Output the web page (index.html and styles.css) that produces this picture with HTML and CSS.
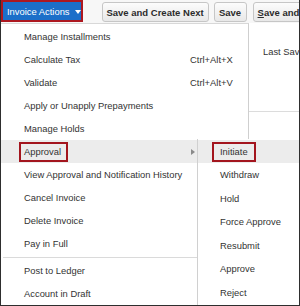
FILE: index.html
```html
<!DOCTYPE html>
<html>
<head>
<meta charset="utf-8">
<link rel="stylesheet" href="styles.css">
</head>
<body>
<div class="frame">
  <div class="toolbar">
    <button class="btn-primary">Invoice Actions <span class="caret"></span></button>
    <button class="btn btn-create">Save and Create Next</button>
    <button class="btn btn-save">Save</button>
    <button class="btn btn-saveand"><u>S</u>ave and Close</button>
  </div>
  <div class="page">
    <div class="last-saved">Last Saved</div>
    <div class="page-rule"></div>
  </div>

  <div class="menu">
    <div class="item"><span>Manage Installments</span></div>
    <div class="item"><span>Calculate Tax</span><span class="key">Ctrl+Alt+X</span></div>
    <div class="item"><span>Validate</span><span class="key">Ctrl+Alt+V</span></div>
    <div class="item"><span>Apply or Unapply Prepayments</span></div>
    <div class="item"><span>Manage Holds</span></div>
    <div class="item active"><span><span class="mark mark-approval">Approval</span></span><span class="arrow"></span></div>
    <div class="item"><span>View Approval and Notification History</span></div>
    <div class="item"><span>Cancel Invoice</span></div>
    <div class="item"><span>Delete Invoice</span></div>
    <div class="item"><span>Pay in Full</span></div>
    <div class="sep"></div>
    <div class="item"><span>Post to Ledger</span></div>
    <div class="item"><span>Account in Draft</span></div>
  </div>

  <div class="submenu">
    <div class="sub-item active"><span class="mark mark-initiate">Initiate</span></div>
    <div class="sub-item">Withdraw</div>
    <div class="sub-item">Hold</div>
    <div class="sub-item">Force Approve</div>
    <div class="sub-item">Resubmit</div>
    <div class="sub-item">Approve</div>
    <div class="sub-item">Reject</div>
  </div>
</div>
</body>
</html>
```
FILE: styles.css
```css
* { box-sizing: border-box; }
html, body { margin: 0; padding: 0; background: #fff; }
body {
  font-family: "Liberation Sans", Arial, sans-serif;
  font-size: 9.4px;
  color: #333;
}
.frame {
  position: relative;
  width: 300px;
  height: 306px;
  overflow: hidden;
  background: #fff;
  border-left: 1px solid #2e2e2e;
  border-right: 1px solid #2e2e2e;
  border-bottom: 1px solid #2e2e2e;
}
.toolbar {
  display: flex;
  align-items: flex-start;
  height: 23px;
  background: #f7f7f7;
  white-space: nowrap;
}
.btn-primary {
  display: flex;
  align-items: center;
  gap: 5px;
  width: 83px;
  height: 22px;
  margin: 0;
  padding: 0 0 0 4px;
  border: 2px solid #ad1820;
  background: #1c6fc9;
  color: #fff;
  font: 9.4px "Liberation Sans", Arial, sans-serif;
}
.caret {
  width: 0;
  height: 0;
  border-left: 3.5px solid transparent;
  border-right: 3.5px solid transparent;
  border-top: 4px solid #fff;
  margin-top: 1px;
}
.btn {
  height: 20px;
  margin-top: 2px;
  padding: 0;
  border: 1px solid #c6c6c6;
  border-radius: 3px;
  background: linear-gradient(#fcfcfc, #e8e8e8);
  color: #2b2b2b;
  font: bold 9.5px "Liberation Sans", Arial, sans-serif;
  flex: none;
}
.btn-create { width: 107px; margin-left: 19px; }
.btn-save { width: 33px; margin-left: 5px; }
.btn-saveand { width: 70px; margin-left: 6px; text-align: left; padding-left: 4px; }
.btn u { text-decoration: underline; }

.page {
  position: relative;
  padding: 23px 0 0 262px;
}
.last-saved {
  line-height: 12px;
  white-space: nowrap;
}
.page-rule {
  height: 1px;
  background: #dcdcdc;
  margin: 53px 0 0 -14px;
}

.menu {
  position: absolute;
  left: 0;
  top: 23px;
  width: 248px;
  bottom: 0;
  background: #fff;
  border-top: 1px solid #d8d8d8;
  border-right: 1px solid #cfcfcf;
  padding-top: 1px;
}
.item {
  display: grid;
  grid-template-columns: 166px auto;
  align-items: center;
  height: 23px;
  padding-left: 23px;
  white-space: nowrap;
}
.item.active { background: #ececec; }
.key { color: #333; }
.arrow {
  width: 0;
  height: 0;
  margin-left: 1px;
  border-top: 3.5px solid transparent;
  border-bottom: 3.5px solid transparent;
  border-left: 4px solid #8a8a8a;
}
.sep {
  height: 1px;
  margin: 2px 0 1px 2px;
  background: #dadada;
}
.mark {
  display: inline-block;
  border: 2px solid #a3151e;
  height: 20px;
  line-height: 16px;
}
.mark-approval { margin-left: -5px; padding: 0 5px 0 3px; }
.mark-initiate { margin-left: -8px; padding: 0 6px; }

.submenu {
  position: absolute;
  left: 196px;
  top: 139px;
  right: 0;
  bottom: 0;
  background: #fff;
  border-left: 1px solid #d0d0d0;
  padding-top: 1px;
}
.sub-item {
  display: flex;
  align-items: center;
  height: 23.5px;
  padding-left: 22px;
  white-space: nowrap;
}
.sub-item.active { height: 23px; background: #ececec; }
```
